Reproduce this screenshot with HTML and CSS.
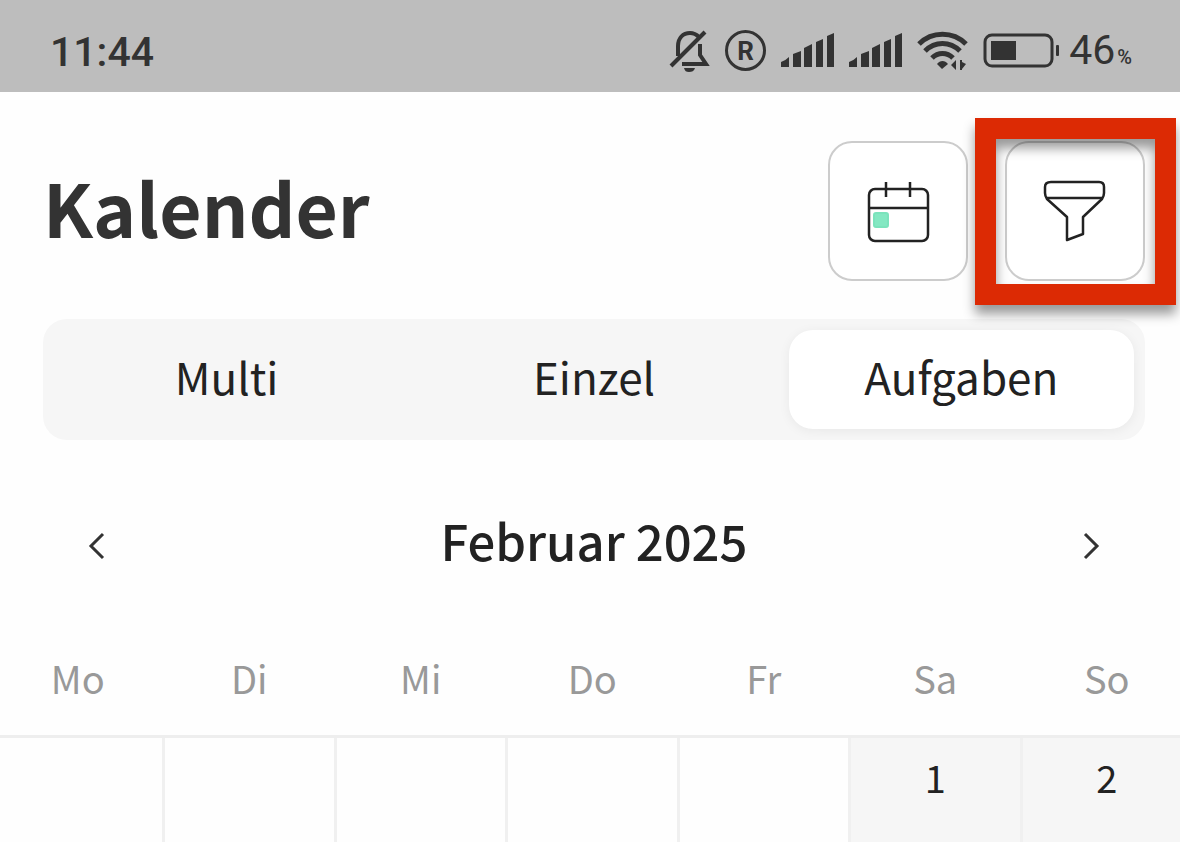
FILE: index.html
```html
<!DOCTYPE html>
<html lang="de">
<head>
  <meta charset="utf-8">
  <title>Kalender</title>
  <meta name="viewport" content="width=device-width, initial-scale=1">
  <link rel="stylesheet" href="styles.css">
</head>
<body>
  <div class="status-bar">
    <span class="status-time">11:44</span>
    <div class="status-icons">
      <svg width="41" height="44" viewBox="0 0 41 44" fill="none" stroke="#333" stroke-width="4">
        <path d="M9 28V18C9 10 14 5 21 5C25 5 28 7 30 9"/>
        <path d="M2 38L36 4"/>
        <path d="M31 16V27L37 36H13"/>
        <path d="M15 40H26C25 43 23 44 20 44S16 43 15 40Z" fill="#333" stroke="none"/>
      </svg>
      <span class="registered">R</span>
      <svg width="53" height="34" viewBox="0 0 53 34" fill="#333">
        <path d="M0 29Q4 28 8 24V34H0ZM12 21L20 18V34H12ZM23 15L31 11V34H23ZM35 9L42 6V34H35ZM46 3L53 0V34H46Z"/>
      </svg>
      <svg width="53" height="34" viewBox="0 0 53 34" fill="#333">
        <path d="M0 29Q4 28 8 24V34H0ZM12 21L20 18V34H12ZM23 15L31 11V34H23ZM35 9L42 6V34H35ZM46 3L53 0V34H46Z"/>
      </svg>
      <svg width="51" height="42" viewBox="0 0 51 42" fill="none" stroke="#333" stroke-width="5">
        <path d="M2 15C15 2 36 2 49 15"/>
        <path d="M8 22C18 12 33 12 43 22"/>
        <path d="M15 29C21 23 30 23 36 29"/>
        <path d="M20 35C23 31 28 31 31 35L25 40Z" fill="#333" stroke="none"/>
        <path d="M39 31V41L34 36ZM43 31H45V33L49 35L45 40V41H43Z" fill="#333" stroke="none"/>
      </svg>
      <svg width="77" height="36" viewBox="0 0 77 36">
        <rect x="2" y="3" width="67" height="31" rx="7" fill="none" stroke="#333" stroke-width="3"/>
        <rect x="8" y="9" width="25" height="19" fill="#333"/>
        <rect x="73" y="13" width="3" height="11" rx="1" fill="#333"/>
      </svg>
      <span class="battery-level">46<small>%</small></span>
    </div>
  </div>

  <header class="page-header">
    <h1>Kalender</h1>
    <div class="header-actions">
      <button type="button" class="icon-button" aria-label="Heute">
        <svg width="64" height="64" viewBox="0 0 64 64" fill="none" stroke="#222" stroke-width="2.5">
          <rect x="3" y="10" width="59" height="52" rx="6"/>
          <path d="M3 29H62M20 3V18M44 3V18"/>
          <rect x="8" y="34" width="14" height="14" rx="2" fill="#83e8c2" stroke="#7be3bc" stroke-width="2"/>
        </svg>
      </button>
      <div class="highlighted">
        <button type="button" class="icon-button" aria-label="Filter">
          <svg width="64" height="64" viewBox="0 0 64 64" fill="none" stroke="#222" stroke-width="2.5" stroke-linejoin="round">
            <path d="M8 3H56Q61 3 61 8V14Q61 17 59 20L40 38V55L24 61V38L4 20Q2 17 2 14V8Q2 3 8 3Z"/>
            <path d="M3 19H60"/>
          </svg>
        </button>
        <div class="highlight-frame"></div>
      </div>
    </div>
  </header>

  <div class="tabs" role="tablist">
    <button type="button" class="tab" role="tab" aria-selected="false">Multi</button>
    <button type="button" class="tab" role="tab" aria-selected="false">Einzel</button>
    <button type="button" class="tab active" role="tab" aria-selected="true">Aufgaben</button>
  </div>

  <div class="month-nav">
    <button type="button" class="nav-button" aria-label="Vorheriger Monat">
      <svg width="18" height="28" viewBox="0 0 18 28" fill="none" stroke="#333" stroke-width="3"><path d="M15 2L3 14L15 26"/></svg>
    </button>
    <h2>Februar 2025</h2>
    <button type="button" class="nav-button" aria-label="Nächster Monat">
      <svg width="18" height="28" viewBox="0 0 18 28" fill="none" stroke="#333" stroke-width="3"><path d="M3 2L15 14L3 26"/></svg>
    </button>
  </div>

  <table class="calendar">
    <thead>
      <tr>
        <th>Mo</th>
        <th>Di</th>
        <th>Mi</th>
        <th>Do</th>
        <th>Fr</th>
        <th>Sa</th>
        <th>So</th>
      </tr>
    </thead>
    <tbody>
      <tr>
        <td></td>
        <td></td>
        <td></td>
        <td></td>
        <td></td>
        <td class="weekend">1</td>
        <td class="weekend">2</td>
      </tr>
    </tbody>
  </table>
</body>
</html>
```
FILE: styles.css
```css
* {
  box-sizing: border-box;
}
body {
  margin: 0;
  font-family: "Noto Sans CJK SC", "Noto Sans", sans-serif;
  color: #222;
  background: #fefefe;
  overflow-x: hidden;
}
h1, h2 {
  margin: 0;
}
button {
  font-family: inherit;
  color: inherit;
  border: none;
  background: none;
  padding: 0;
  cursor: pointer;
}
svg {
  display: block;
}

/* Status bar */
.status-bar {
  display: flex;
  justify-content: space-between;
  align-items: center;
  height: 92px;
  padding: 12px 48px 0 50px;
  background: #bdbdbd;
  color: #333;
  font-family: Roboto, sans-serif;
  font-size: 41px;
  line-height: 48px;
}
.status-time {
  font-weight: 500;
}
.status-icons {
  display: flex;
  align-items: center;
  gap: 15px;
  padding-bottom: 4px;
}
.registered {
  width: 41px;
  height: 41px;
  border: 3px solid #333;
  border-radius: 50%;
  font-size: 26px;
  font-weight: 700;
  line-height: 36px;
  text-align: center;
}
.battery-level {
  margin-left: -6px;
  padding-top: 6px;
}
.battery-level small {
  margin-left: 2px;
  font-size: 20px;
  font-weight: 500;
}

/* Title and actions */
.page-header {
  display: flex;
  justify-content: space-between;
  align-items: center;
  padding: 49px 35px 38px 43px;
}
.page-header h1 {
  padding-bottom: 10px;
  font-size: 73px;
  font-weight: 700;
  line-height: 100px;
  color: #333;
}
.header-actions {
  display: flex;
  gap: 37px;
}
.icon-button {
  display: flex;
  align-items: center;
  justify-content: center;
  width: 140px;
  height: 140px;
  border: 2px solid #ccc;
  border-radius: 24px;
  background: #fff;
}
.highlighted {
  position: relative;
}
.highlight-frame {
  position: absolute;
  inset: -23px -31px -24px -30px;
  border: 21px solid #dc2a04;
  filter: drop-shadow(0 9px 6px rgba(0, 0, 0, 0.4));
  pointer-events: none;
}

/* Tabs */
.tabs {
  display: grid;
  grid-template-columns: repeat(3, 1fr);
  margin: 0 35px 0 43px;
  padding: 11px 0;
  border-radius: 24px;
  background: #f6f6f6;
}
.tab {
  margin: 0 11px;
  padding: 14px 0 21px;
  border-radius: 24px;
  font-size: 44px;
  line-height: 64px;
}
.tab.active {
  background: #fff;
  box-shadow: 0 2px 12px rgba(0, 0, 0, 0.06);
}

/* Month */
.month-nav {
  display: flex;
  justify-content: space-between;
  align-items: center;
  margin: 64px 27px 38px 35px;
  height: 84px;
}
.month-nav h2 {
  padding-bottom: 12px;
  font-size: 49px;
  font-weight: 500;
  line-height: 76px;
}
.nav-button {
  display: flex;
  align-items: center;
  justify-content: center;
  width: 124px;
  height: 84px;
}

/* Calendar grid, bleeds over both page edges */
.calendar {
  width: calc(100% + 22px);
  margin-left: -8px;
  border-collapse: collapse;
  table-layout: fixed;
}
.calendar th {
  height: 110px;
  padding: 0 0 4px;
  border-bottom: 3px solid #eee;
  font-size: 38px;
  font-weight: 400;
  line-height: 56px;
  color: #999;
}
.calendar td {
  height: 106px;
  padding: 11px 0 0;
  border-right: 3px solid #f0f0f0;
  font-size: 38px;
  line-height: 56px;
  text-align: center;
  vertical-align: top;
}
.calendar td.weekend {
  background: #f6f6f6;
}
```
